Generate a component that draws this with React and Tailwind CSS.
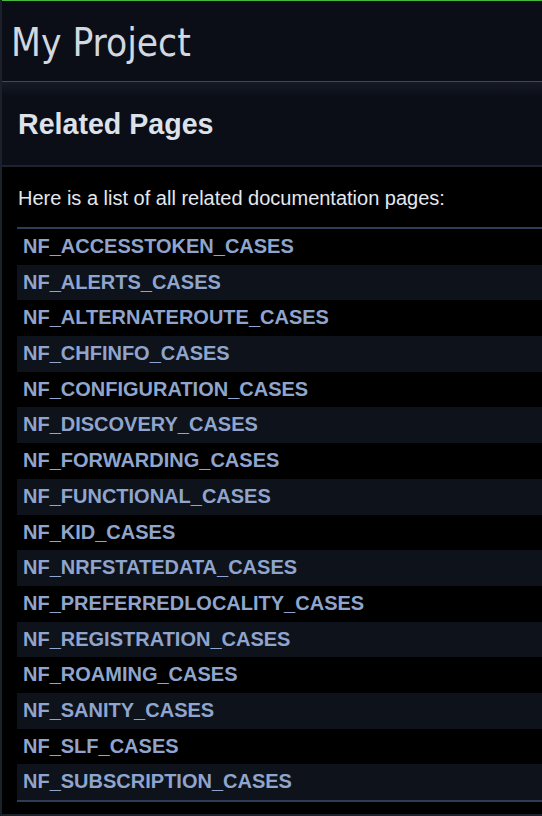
const pages = [
  'NF_ACCESSTOKEN_CASES',
  'NF_ALERTS_CASES',
  'NF_ALTERNATEROUTE_CASES',
  'NF_CHFINFO_CASES',
  'NF_CONFIGURATION_CASES',
  'NF_DISCOVERY_CASES',
  'NF_FORWARDING_CASES',
  'NF_FUNCTIONAL_CASES',
  'NF_KID_CASES',
  'NF_NRFSTATEDATA_CASES',
  'NF_PREFERREDLOCALITY_CASES',
  'NF_REGISTRATION_CASES',
  'NF_ROAMING_CASES',
  'NF_SANITY_CASES',
  'NF_SLF_CASES',
  'NF_SUBSCRIPTION_CASES',
];

export default function App() {
  return (
    <div className="h-[816px] w-[542px] overflow-hidden bg-black border-l-2 border-b-2 border-[#1b212b] font-['Liberation_Sans',Arial,sans-serif]">
      {/* project title bar */}
      <div className="border-t border-[#45b83f] bg-[#0b0e17]">
        <div className="h-[80px] pl-[9px] pt-[18px] text-[38.5px] leading-[48px] text-[#d2d8e0] font-['DejaVu_Sans_Condensed','Liberation_Sans',sans-serif]">
          My Project
        </div>
      </div>
      <div className="h-px bg-[#34486c]" />

      {/* page header */}
      <div className="bg-[#0b0e17] border-b-2 border-[#1b2230]">
        <div className="h-[15px] bg-gradient-to-b from-[#151a26] to-[#0b0e17]" />
        <div className="h-[68px] pl-[16px] pt-[10px]">
          <h1 className="text-[28.6px] leading-[34px] font-bold text-[#dde2ea]">Related Pages</h1>
        </div>
      </div>

      {/* contents */}
      <div className="pl-[15px] pt-[19px]">
        <p className="ml-px text-[20px] leading-[24px] text-[#e4e8ee]">Here is a list of all related documentation pages:</p>
        <div className="mt-[17px] w-[560px] border-t-2 border-b-2 border-[#2e3d57]">
          {pages.map((p, i) => (
            <div
              key={p}
              className={`h-[35.7px] pl-[6px] text-[20px] leading-[35.7px] font-bold text-[#8fa5cd] ${i % 2 ? 'bg-[#0e121b]' : 'bg-black'}`}
            >
              {p}
            </div>
          ))}
        </div>
      </div>
    </div>
  );
}
